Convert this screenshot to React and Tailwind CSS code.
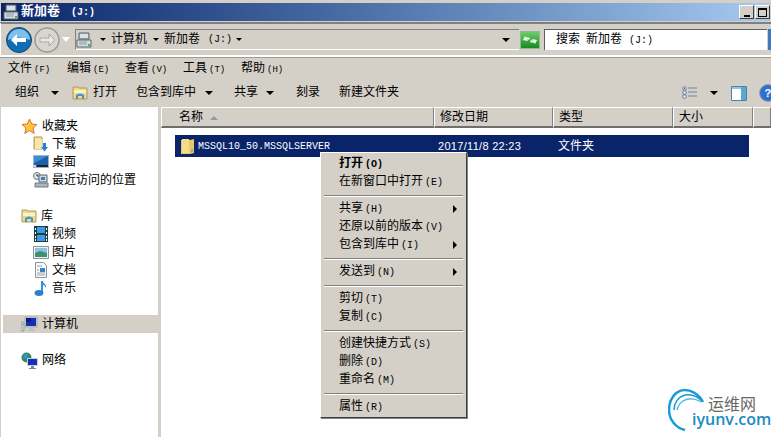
import React from "react";

const cjk = "font-['Liberation_Mono','Noto_Sans_CJK_SC',monospace]";

// mnemonic such as (F): drawn narrow, like the bitmap font in the picture
function Key({ k }) {
  return <span className="font-['Liberation_Mono',monospace] text-[9px] ml-[2px]">({k})</span>;
}

function Arrow({ className = "" }) {
  return <span className={"inline-block w-0 h-0 shrink-0 border-x-[4px] border-x-transparent border-t-[4px] border-t-black " + className} />;
}

function Folder({ size = 16, x = 0 }) {
  return (
    <svg width={size} height={size} viewBox="0 0 16 16" className="shrink-0">
      <path d="M1 1h8v12H1z" fill="#e8cf85" stroke="#b79b4d" strokeWidth="1" />
      <path d="M2 2h5l2 1v10H2z" fill="#f7e7ae" />
      {x > 0 && <path d="M10 7h3v4h2l-3.500 4.500L8 11h2z" fill="#2a7fd0" />}
    </svg>
  );
}

function LibraryIcon() {
  return (
    <svg width="16" height="16" viewBox="0 0 16 16" className="shrink-0">
      <path d="M1 2h5l1 1h8v11H1z" fill="#ecd88f" stroke="#b79b4d" />
      <path d="M2 5h12v3H2z" fill="#fbf2c8" />
      <path d="M4 14V10q4-3 8 0v4h-2v-3H6v3z" fill="#3f97cf" />
    </svg>
  );
}

function DriveIcon() {
  return (
    <svg width="16" height="16" viewBox="0 0 16 16" className="shrink-0">
      <path d="M3 1h10v6H3z" fill="#b9c6cf" stroke="#59656e" />
      <path d="M4 3h8M4 5h8" stroke="#fff" />
      <path d="M1 8h14v7H1z" fill="#d9dee2" stroke="#59656e" />
      <path d="M3 10h8M3 12h8" stroke="#8b98a2" />
      <path d="M12 12h2v2h-2z" fill="#3fb34a" />
    </svg>
  );
}

function StarIcon() {
  return (
    <svg width="17" height="17" viewBox="0 0 17 17" className="shrink-0">
      <path d="M8.500 1l2.200 5 5.300.5-4 3.500 1.200 5.500-4.700-2.900-4.700 2.900L5 10 1 6.500 6.300 6z" fill="#ffc640" stroke="#d9752c" />
    </svg>
  );
}

function DesktopIcon() {
  return (
    <svg width="16" height="16" viewBox="0 0 16 16" className="shrink-0">
      <path d="M0 1h16v13H0z" fill="#9db4cb" />
      <path d="M1 2h14v11H1z" fill="#1b5fae" />
      <path d="M1 2h14L1 9z" fill="#3f8ad2" />
      <path d="M4 11h11v2H4z" fill="#1a2230" />
      <path d="M1 11h2v2H1z" fill="#d9dee2" />
    </svg>
  );
}

function RecentIcon() {
  return (
    <svg width="16" height="16" viewBox="0 0 16 16" className="shrink-0">
      <circle cx="4" cy="4" r="3.500" fill="#dfe4e8" stroke="#6d7880" />
      <path d="M4 2v2h2" stroke="#333" fill="none" />
      <path d="M6 3h8v7H6z" fill="#d2d8dc" stroke="#59656e" />
      <path d="M8 5h4v3H8z" fill="#3b7fc4" />
      <path d="M2 11h13v4H2z" fill="#aeb5ba" stroke="#6d7880" />
    </svg>
  );
}

function VideoIcon() {
  return (
    <svg width="16" height="16" viewBox="0 0 16 16" className="shrink-0">
      <path d="M1 0h14v16H1z" fill="#1f3d3d" />
      <path d="M4 1h8v6H4zM4 9h8v6H4z" fill="#3c9ae6" />
      <path d="M2 2h1v2H2zM2 6h1v2H2zM2 10h1v2H2zM2 13h1v2H2zM13 2h1v2h-1zM13 6h1v2h-1zM13 10h1v2h-1zM13 13h1v2h-1z" fill="#fff" />
    </svg>
  );
}

function PictureIcon() {
  return (
    <svg width="16" height="16" viewBox="0 0 16 16" className="shrink-0">
      <path d="M0.500 2.500h15v12H0.500z" fill="#eef1f3" stroke="#8a949c" />
      <path d="M2 4h12v5H2z" fill="#8fc1e3" />
      <path d="M2 9l5-2 7 2v4H2z" fill="#3f8f70" />
    </svg>
  );
}

function DocIcon() {
  return (
    <svg width="16" height="16" viewBox="0 0 16 16" className="shrink-0">
      <path d="M2.500 0.500h8l3 3v12h-11z" fill="#f6f8fa" stroke="#8a949c" />
      <path d="M7 6h5v4H7z" fill="#3b7fc4" />
      <path d="M4 4h5M4 8h2M4 11h8M4 13h8" stroke="#98a3ab" />
    </svg>
  );
}

function MusicIcon() {
  return (
    <svg width="16" height="16" viewBox="0 0 16 16" className="shrink-0">
      <path d="M8 1h2c0 3 4 3 3 7-1-2-2-3-3-3v8H8z" fill="#3a8fd8" />
      <ellipse cx="6" cy="13" rx="4.500" ry="3" fill="#2a7fd0" />
    </svg>
  );
}

function ComputerIcon() {
  return (
    <svg width="17" height="16" viewBox="0 0 17 16" className="shrink-0">
      <path d="M0 6h3v9H0z" fill="#c8ced2" stroke="#7c868d" strokeWidth="0.600" />
      <path d="M1 8h1v1H1z" fill="#3fb34a" />
      <path d="M4 1h12v10H4z" fill="#c9cfd3" stroke="#8a949c" strokeWidth="0.600" />
      <path d="M5 2h10v8H5z" fill="#1230b8" />
      <path d="M5 2h5v4H5z" fill="#0a1a80" />
      <path d="M8 12h4v2H8zM6 14h8v1H6z" fill="#b9bfc4" />
    </svg>
  );
}

function NetworkIcon() {
  return (
    <svg width="17" height="17" viewBox="0 0 17 17" className="shrink-0">
      <circle cx="5.500" cy="5.500" r="5" fill="#2f8f5f" />
      <path d="M2 2h5l-1 4H3zM8 6l2 2-3 2z" fill="#3b8fe0" />
      <path d="M6 6h11v8H6z" fill="#c9cfd3" />
      <path d="M7 7h9v6H7z" fill="#1230b8" />
      <path d="M10 14h3v2h-3zM8 16h7v1H8z" fill="#7c868d" />
    </svg>
  );
}

function SideRow({ icon, label, child, active }) {
  return (
    <div className={"h-[18px] flex items-center text-[12px] text-black " + (child ? "pl-[32px] gap-[3px]" : "pl-[20px] gap-[4px]") + (active ? " bg-[#d4d0c8] ml-[2px] !pl-[18px]" : "")}>
      {icon}
      <span className="whitespace-nowrap pt-[2px]">{label}</span>
    </div>
  );
}

function HeaderCell({ w, children, grow }) {
  return (
    <div className={"h-[21px] flex items-center pl-[5px] pt-[2px] bg-[#d4d0c8] border-t border-l border-t-white border-l-white border-r border-b-2 border-r-[#808080] border-b-[#6e6e6e] text-[12px] text-black box-border " + (grow ? "flex-1" : "shrink-0")} style={{ width: w }}>
      {children}
    </div>
  );
}

function MenuRow({ label, k, bold, sub }) {
  return (
    <div className={"h-[18px] flex items-center pl-[18px] pr-[9px] text-[12px] text-black " + (bold ? "font-bold" : "")}>
      <span>{label}</span>
      <span className={"font-['Liberation_Mono',monospace] text-[10px] ml-[2px] " + (bold ? "font-bold" : "")}>({k})</span>
      {sub && <span className="ml-auto w-0 h-0 border-y-[4px] border-y-transparent border-l-[4px] border-l-black" />}
    </div>
  );
}

function MenuSep() {
  return <div className="h-px mx-[3px] mt-[4px] mb-[3px] bg-[#808080] border-b border-b-white box-content" />;
}

export default function App() {
  return (
    <div className={"relative w-[771px] h-[437px] overflow-hidden bg-[#d4d0c8] flex flex-col " + cjk}>
      {/* title bar */}
      <div className="mt-[3px] h-[18px] mx-[1px] shrink-0 flex items-center bg-gradient-to-r from-[#0a246a] to-[#a6caf0] pl-[2px]">
        <DriveIcon />
        <span className="ml-[2px] text-[13px] font-bold text-white whitespace-nowrap">新加卷</span>
        <span className="ml-[11px] text-[10px] font-bold text-white">(J:)</span>
        <div className="ml-auto flex gap-px pr-0">
          <div className="w-[15px] h-[14px] bg-[#d4d0c8] border border-t-white border-l-white border-r-[#404040] border-b-[#404040] flex items-end justify-center pb-[1px]">
            <span className="w-[6px] h-[2px] bg-black" />
          </div>
          <div className="w-[15px] h-[14px] bg-[#d4d0c8] border border-t-white border-l-white border-r-[#404040] border-b-[#404040] flex items-center justify-center">
            <span className="w-[9px] h-[9px] border border-black border-t-2" />
          </div>
        </div>
      </div>

      {/* address bar */}
      <div className="mt-[1px] h-[35px] shrink-0 border-t-2 border-t-[#808080] border-b-2 border-b-white border-l border-l-white flex items-center pl-[5px] pr-0">
        <svg width="26" height="26" viewBox="0 0 26 26" className="shrink-0">
          <circle cx="13" cy="13" r="12.500" fill="#0f6fb5" stroke="#1c3f66" />
          <path d="M2 13a11 11 0 0 1 22 0q-11-5-22 0" fill="#7fc0ea" />
          <path d="M5 13l6-6v4h9v4h-9v4z" fill="#fff" />
        </svg>
        <svg width="26" height="26" viewBox="0 0 26 26" className="ml-[2px] shrink-0">
          <circle cx="13" cy="13" r="12" fill="#d8d6d0" stroke="#9c9a94" strokeWidth="1.500" />
          <path d="M21 13l-6-6v4H6v4h9v4z" fill="#e9e7e2" stroke="#a9a7a1" />
        </svg>
        <span className="ml-[2px] w-0 h-0 shrink-0 border-x-[4px] border-x-transparent border-t-[5px] border-t-white" />
        <div className="ml-[5px] w-[444px] h-[21px] shrink-0 border-t border-l border-t-[#808080] border-l-[#808080] flex items-center pl-0 text-[12px] text-black border-b border-b-white">
          <DriveIcon />
          <Arrow className="ml-[8px] !border-x-[3px] !border-t-[3px]" />
          <span className="ml-[5px] whitespace-nowrap">计算机</span>
          <Arrow className="ml-[6px] !border-x-[3px] !border-t-[3px]" />
          <span className="ml-[5px] whitespace-nowrap">新加卷</span>
          <span className="ml-[8px] font-['Liberation_Mono',monospace] text-[10px]">(J:)</span>
          <Arrow className="ml-[4px] !border-x-[3px] !border-t-[3px]" />
          <Arrow className="ml-auto mr-[9px]" />
        </div>
        <div className="h-[21px] w-[21px] shrink-0 flex items-center justify-center">
          <svg width="20" height="18" viewBox="0 0 20 18">
            <defs>
              <linearGradient id="refreshFill" x1="0" y1="0" x2="0" y2="1">
                <stop offset="0" stopColor="#6fd06a" />
                <stop offset="1" stopColor="#108a1c" />
              </linearGradient>
            </defs>
            <rect x="0.500" y="0.500" width="19" height="17" fill="url(#refreshFill)" stroke="#8fb893" />
            <path d="M3 9l2-4 1 1.500 3 0 1 2-3 0 1 1.500zM17 9l-2 4-1-1.500-3 0-1-2 3 0-1-1.500z" fill="#fff" />
          </svg>
        </div>
        <div className="ml-[4px] flex-1 h-[21px] bg-white border-t border-l border-[#606060] flex items-center pl-[11px] text-[12px] text-black">
          <span>搜索</span>
          <span className="ml-[6px]">新加卷</span>
          <span className="ml-[7px] font-['Liberation_Mono',monospace] text-[10px]">(J:)</span>
        </div>
        <div className="w-[3px] h-[21px] bg-[#3d78c0] ml-[1px]" />
      </div>

      {/* menu bar */}
      <div className="h-[22px] shrink-0 border-t border-t-[#a09c94] flex items-center pl-[8px] text-[12px] text-black">
        <span className="w-[59px] whitespace-nowrap">文件<Key k="F" /></span>
        <span className="w-[58px] whitespace-nowrap">编辑<Key k="E" /></span>
        <span className="w-[58px] whitespace-nowrap">查看<Key k="V" /></span>
        <span className="w-[58px] whitespace-nowrap">工具<Key k="T" /></span>
        <span className="whitespace-nowrap">帮助<Key k="H" /></span>
      </div>

      {/* command bar */}
      <div className="h-[28px] shrink-0 flex items-center pl-[15px] text-[12px] text-black whitespace-nowrap">
        <span>组织</span>
        <Arrow className="ml-[12px]" />
        <div className="ml-[13px]"><LibraryIcon /></div>
        <span className="ml-[5px]">打开</span>
        <span className="ml-[19px]">包含到库中</span>
        <Arrow className="ml-[9px]" />
        <span className="ml-[21px]">共享</span>
        <Arrow className="ml-[8px]" />
        <span className="ml-[22px]">刻录</span>
        <span className="ml-[19px]">新建文件夹</span>
        <svg width="16" height="14" viewBox="0 0 16 14" className="ml-[283px] shrink-0">
          <path d="M1 1h3v3H1zM1 5h3v3H1zM1 9h3v3H1z" fill="#fff" stroke="#4a6d9c" strokeWidth="0.800" />
          <path d="M2 2h1v1H2z" fill="#d03030" />
          <path d="M6 2h9M6 6h9M6 10h9" stroke="#6d84a3" />
        </svg>
        <Arrow className="ml-[12px]" />
        <svg width="16" height="15" viewBox="0 0 16 15" className="ml-[13px] shrink-0">
          <path d="M0.500 0.500h15v14H0.500z" fill="#fff" stroke="#4a7fa8" />
          <path d="M10 1h5v13h-5z" fill="#58a8d0" />
          <path d="M1 1h9v2H1z" fill="#9cc4dc" />
        </svg>
        <svg width="12" height="18" viewBox="0 0 12 18" className="ml-[12px] shrink-0">
          <circle cx="9" cy="9" r="8.500" fill="#2f6fd0" stroke="#9aa4ad" />
          <text x="5.500" y="13" fill="#fff" fontSize="11" fontWeight="700" fontFamily="Liberation Sans">?</text>
        </svg>
      </div>

      {/* main */}
      <div className="flex-1 min-h-0 flex">
        <div className="w-[157px] ml-[1px] shrink-0 bg-white pt-[9px] border-t border-t-white">
          <SideRow icon={<StarIcon />} label="收藏夹" />
          <SideRow child icon={<Folder x={1} />} label="下载" />
          <SideRow child icon={<DesktopIcon />} label="桌面" />
          <SideRow child icon={<RecentIcon />} label="最近访问的位置" />
          <div className="h-[18px]" />
          <SideRow icon={<LibraryIcon />} label="库" />
          <SideRow child icon={<VideoIcon />} label="视频" />
          <SideRow child icon={<PictureIcon />} label="图片" />
          <SideRow child icon={<DocIcon />} label="文档" />
          <SideRow child icon={<MusicIcon />} label="音乐" />
          <div className="h-[18px]" />
          <SideRow active icon={<ComputerIcon />} label="计算机" />
          <div className="h-[18px]" />
          <SideRow icon={<NetworkIcon />} label="网络" />
        </div>
        <div className="flex-1 ml-[3px] bg-white flex flex-col">
          <div className="flex shrink-0">
            <HeaderCell w={273}>
              <span className="ml-[12px]">名称</span>
              <span className="ml-[7px] w-0 h-0 border-x-[4px] border-x-transparent border-b-[4px] border-b-[#9a9a9a]" />
            </HeaderCell>
            <HeaderCell w={119}>修改日期</HeaderCell>
            <HeaderCell w={120}>类型</HeaderCell>
            <HeaderCell w={80}>大小</HeaderCell>
            <HeaderCell grow />
          </div>
          <div className="mt-[7px] ml-[14px] mr-[22px] h-[22px] bg-[#0a246a] text-white flex items-center pl-[5px] text-[12px]">
            <svg width="16" height="18" viewBox="0 0 16 18" className="shrink-0">
              <path d="M1 3h9l4-1v14l-4 1H1z" fill="#e9c860" />
              <path d="M2 2h7v14H2z" fill="#f4dc8c" />
              <path d="M11 12h2v3h-2z" fill="#6fb0e0" />
            </svg>
            <span className="ml-[2px] w-[240px] font-['Liberation_Mono',monospace] text-[10px]">MSSQL10_50.MSSQLSERVER</span>
            <span className="w-[120px] font-['Liberation_Sans',sans-serif] text-[11px] tracking-[0.3px]">2017/11/8 22:23</span>
            <span className="pt-[2px]">文件夹</span>
          </div>
        </div>
      </div>

      {/* context menu */}
      <div className="absolute left-[320px] top-[152px] w-[147px] bg-[#d4d0c8] border border-t-white border-l-white border-r-[#404040] border-b-[#404040] shadow-[1px_1px_0_#808080] pt-[2px] pb-[1px]">
        <MenuRow bold label="打开" k="O" />
        <MenuRow label="在新窗口中打开" k="E" />
        <MenuSep />
        <MenuRow sub label="共享" k="H" />
        <MenuRow label="还原以前的版本" k="V" />
        <MenuRow sub label="包含到库中" k="I" />
        <MenuSep />
        <MenuRow sub label="发送到" k="N" />
        <MenuSep />
        <MenuRow label="剪切" k="T" />
        <MenuRow label="复制" k="C" />
        <MenuSep />
        <MenuRow label="创建快捷方式" k="S" />
        <MenuRow label="删除" k="D" />
        <MenuRow label="重命名" k="M" />
        <MenuSep />
        <MenuRow label="属性" k="R" />
      </div>

      {/* watermark */}
      <div className="absolute left-[668px] top-[388px] w-[103px] h-[46px]">
        <svg width="38" height="44" viewBox="0 0 38 44" className="absolute left-0 top-0">
          <path d="M35 14C30 5 22 2 17 2 7 2 1 12 1 22 1 32 8 40 17 42" fill="none" stroke="#1a9ad6" strokeWidth="2.500" />
          <path d="M34 13C28 7 22 6 17 7 10 9 6 15 6 22" fill="none" stroke="#1a9ad6" strokeWidth="1.500" />
          <path d="M33 14C27 10 20 10 15 13 12 15 10 18 9 22" fill="none" stroke="#5cb8e4" strokeWidth="1.500" />
        </svg>
        <span className="absolute left-[40px] top-[7px] text-[16px] leading-[16px] text-[#666] font-['Noto_Sans_CJK_SC',sans-serif]">运维网</span>
        <span className="absolute left-[24px] top-[23px] text-[16px] leading-[16px] font-semibold text-[#1c8ac4] font-['Open_Sans',sans-serif]">iyunv.com</span>
      </div>
    </div>
  );
}
